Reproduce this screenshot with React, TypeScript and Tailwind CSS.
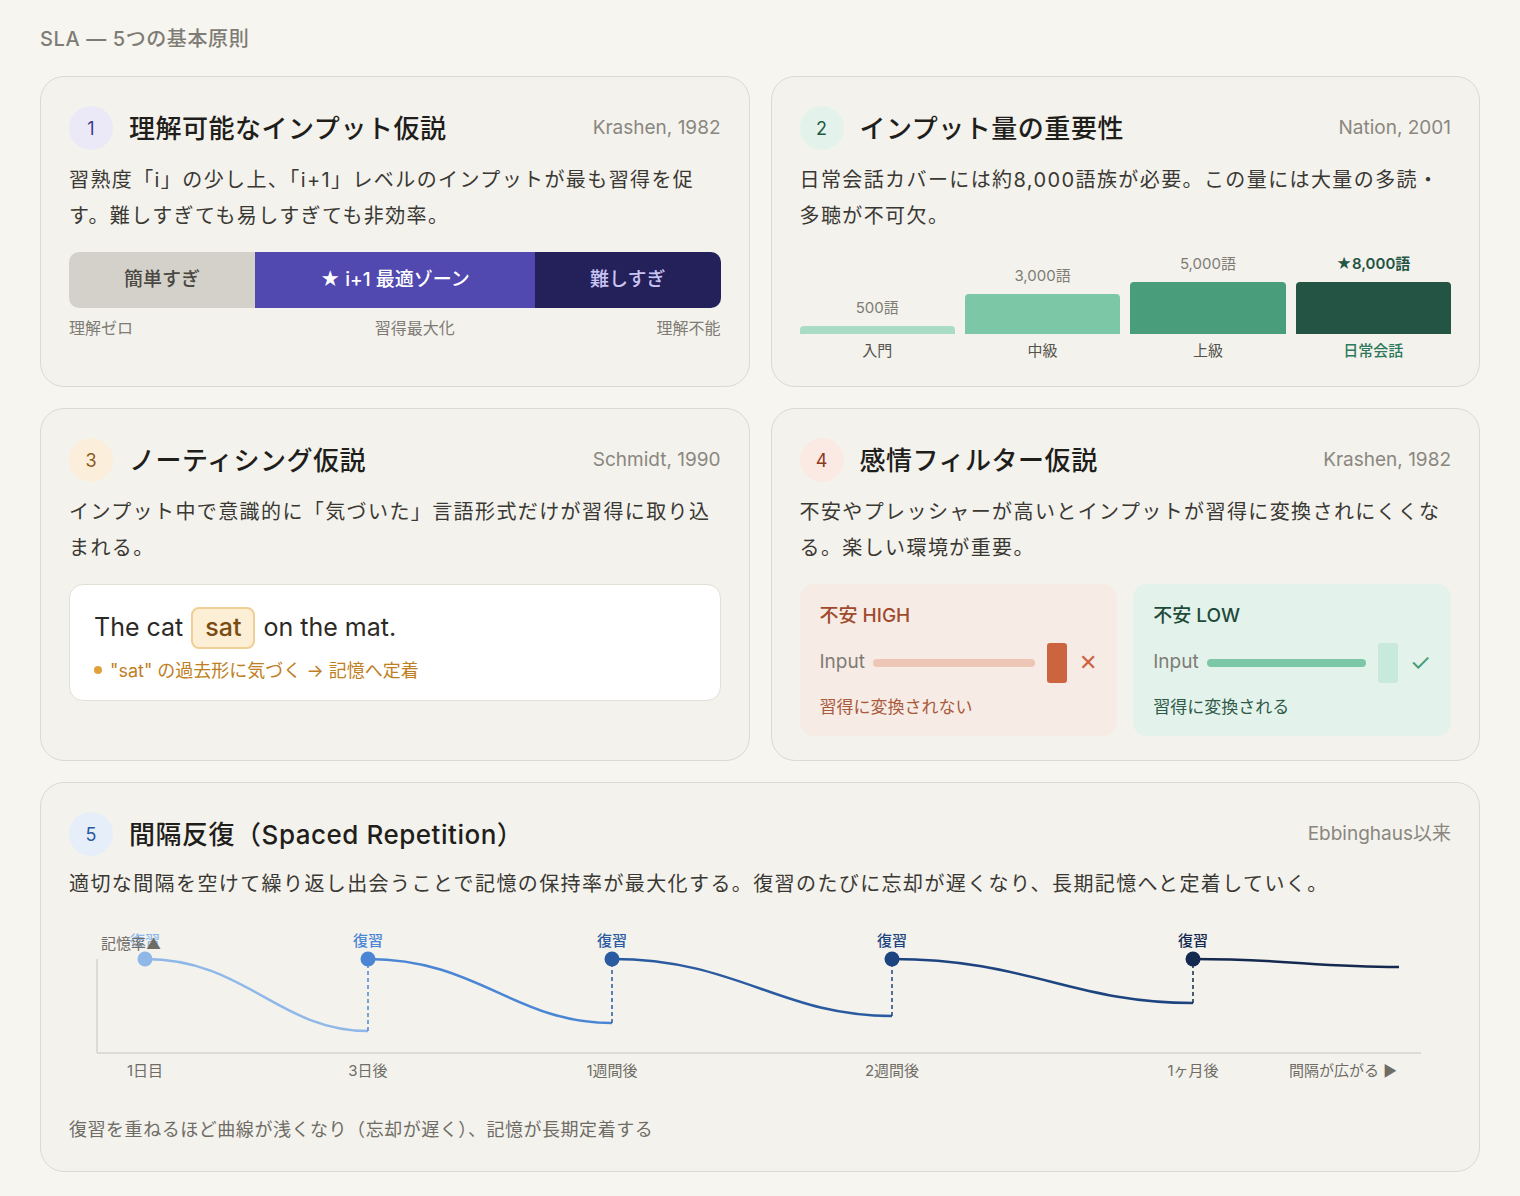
import React from "react";

const font = { fontFamily: '"Inter", "Noto Sans CJK JP", sans-serif' };

function Header({ n, title, cite, badge }: { n: string; title: string; cite: string; badge: string }) {
  return (
    <div className="flex items-center justify-between">
      <div className="flex items-center gap-4">
        <div className={`w-11 h-11 rounded-full flex items-center justify-center text-[18px] ${badge}`}>{n}</div>
        <div className="text-[26px] font-medium text-[#1f1e1b] tracking-[0.02em]">{title}</div>
      </div>
      <div className="text-[19px] text-[#8a877f]">{cite}</div>
    </div>
  );
}

function Card({ children, className = "" }: { children: React.ReactNode; className?: string }) {
  return (
    <div className={`rounded-[24px] border border-[#dcd9d1] bg-[#f3f2ed] px-7 pt-[29px] pb-7 ${className}`}>{children}</div>
  );
}

const bars = [
  { v: "500語", h: 8, c: "bg-[#a9dcc6]", l: "入門", hl: false },
  { v: "3,000語", h: 40, c: "bg-[#7cc8a6]", l: "中級", hl: false },
  { v: "5,000語", h: 52, c: "bg-[#4a9d7a]", l: "上級", hl: false },
  { v: "★8,000語", h: 52, c: "bg-[#245443]", l: "日常会話", hl: true },
];

const body = "text-[20px] leading-[36px] text-[#3a3833] tracking-[0.07em]";

function Chart() {
  const dots = [
    [76, 33, "#8fb8e8"],
    [299, 33, "#4a86d4"],
    [543, 33, "#2a5aa0"],
    [823, 33, "#1e4480"],
    [1124, 33, "#13294f"],
  ] as const;
  const ends = [
    [299, 105],
    [543, 97],
    [823, 90],
    [1124, 77],
    [1330, 41],
  ];
  const xl = ["1日目", "3日後", "1週間後", "2週間後", "1ヶ月後"];
  return (
    <svg width="1382" height="160" className="block" style={font}>
      <line x1="28" y1="33" x2="28" y2="127" stroke="#d6d3cb" strokeWidth="1.5" />
      <line x1="28" y1="127" x2="1352" y2="127" stroke="#d6d3cb" strokeWidth="1.5" />
      {dots.map(([x, y, c], i) => {
        const [ex, ey] = ends[i];
        const dx = ex - x;
        return (
          <g key={i}>
            <path
              d={`M${x} ${y} C ${x + dx * 0.45} ${y}, ${x + dx * 0.6} ${ey}, ${ex} ${ey}`}
              fill="none"
              stroke={c}
              strokeWidth="2.5"
            />
            {i < 4 && (
              <line x1={ex} y1={ey} x2={ex} y2={33} stroke={dots[i + 1][2]} strokeWidth="1.5" strokeDasharray="4 3" />
            )}
            <circle cx={x} cy={y} r="7.5" fill={c} />
            <text x={x} y={20} textAnchor="middle" fontSize="15" fill={c} fontWeight="500">復習</text>
            <text x={x} y={150} textAnchor="middle" fontSize="15" fill="#6f6c65">{xl[i]}</text>
          </g>
        );
      })}
      <text x="32" y="23" fontSize="15" fill="#6f6c65">記憶率▲</text>
      <text x="1328" y="150" textAnchor="end" fontSize="15" fill="#6f6c65">間隔が広がる ▶</text>
    </svg>
  );
}

export default function App() {
  return (
    <div className="min-h-screen bg-[#f6f5f0] px-10 pt-6 pb-6" style={font}>
      <div className="text-[20px] font-medium text-[#7f7c75] mb-[22px] tracking-[0.03em]">SLA — 5つの基本原則</div>
      <div className="grid grid-cols-2 gap-[21px]">
        <Card className="h-[311px]">
          <Header n="1" title="理解可能なインプット仮説" cite="Krashen, 1982" badge="bg-[#ebe9f8] text-[#3d3a8c]" />
          <p className={`mt-[12px] ${body}`}>
            習熟度「i」の少し上、「i+1」レベルのインプットが最も習得を促す。難しすぎても易しすぎても非効率。
          </p>
          <div className="mt-[18px] flex h-14 rounded-[10px] overflow-hidden text-[19px] font-medium">
            <div className="w-[186px] bg-[#d4d1ca] text-[#4a4842] flex items-center justify-center">簡単すぎ</div>
            <div className="w-[280px] bg-[#5149b0] text-white flex items-center justify-center">★ i+1 最適ゾーン</div>
            <div className="flex-1 bg-[#24205a] text-[#c8c4f2] flex items-center justify-center">難しすぎ</div>
          </div>
          <div className="mt-2 flex justify-between text-[16px] text-[#7f7c75]">
            <span>理解ゼロ</span><span className="ml-10">習得最大化</span><span>理解不能</span>
          </div>
        </Card>
        <Card className="h-[311px]">
          <Header n="2" title="インプット量の重要性" cite="Nation, 2001" badge="bg-[#e3f3ec] text-[#1f5a45]" />
          <p className={`mt-[12px] ${body}`}>
            日常会話カバーには約8,000語族が必要。この量には大量の多読・多聴が不可欠。
          </p>
          <div className="mt-[14px] grid grid-cols-4 gap-[10px] items-end h-[86px]">
            {bars.map((b) => (
              <div key={b.v} className="flex flex-col items-center">
                <div className={`text-[15px] mb-[7px] ${b.hl ? "text-[#245443] font-semibold" : "text-[#7f7c75]"}`}>{b.v}</div>
                <div className={`w-full rounded-t-[4px] ${b.c}`} style={{ height: b.h }} />
              </div>
            ))}
          </div>
          <div className="grid grid-cols-4 gap-[10px] mt-[6px] text-[15px] text-center">
            {bars.map((b) => (
              <div key={b.l} className={b.hl ? "text-[#2f7a5c] font-medium" : "text-[#55524c]"}>{b.l}</div>
            ))}
          </div>
        </Card>
        <Card className="h-[353px]">
          <Header n="3" title="ノーティシング仮説" cite="Schmidt, 1990" badge="bg-[#fbeedb] text-[#8a5a1c]" />
          <p className={`mt-[12px] ${body}`}>
            インプット中で意識的に「気づいた」言語形式だけが習得に取り込まれる。
          </p>
          <div className="mt-[18px] rounded-[14px] border border-[#e2dfd7] bg-white px-6 pt-[22px] pb-4">
            <div className="flex items-center gap-2 text-[25px] text-[#2c2a26]">
              <span>The cat</span>
              <span className="rounded-[8px] border-2 border-[#efcf94] bg-[#fcefd6] px-3 text-[#7a4c12] font-medium">sat</span>
              <span>on the mat.</span>
            </div>
            <div className="mt-[8px] flex items-center gap-2 text-[18px] text-[#c07e22]">
              <span className="w-2 h-2 rounded-full bg-[#e0a13c]" />
              "sat" の過去形に気づく → 記憶へ定着
            </div>
          </div>
        </Card>
        <Card className="h-[353px]">
          <Header n="4" title="感情フィルター仮説" cite="Krashen, 1982" badge="bg-[#fbe9e3] text-[#8a3a1f]" />
          <p className={`mt-[12px] ${body}`}>
            不安やプレッシャーが高いとインプットが習得に変換されにくくなる。楽しい環境が重要。
          </p>
          <div className="mt-[18px] grid grid-cols-2 gap-4">
            <div className="rounded-[14px] bg-[#f7ebe6] px-5 pt-[18px] pb-4">
              <div className="text-[19px] text-[#a04a2c] font-medium">不安 HIGH</div>
              <div className="mt-3 flex items-center gap-2">
                <span className="text-[19px] text-[#7f7c75]">Input</span>
                <div className="flex-1 h-2 rounded-full bg-[#eec6b6]" />
                <div className="ml-1 w-5 h-10 rounded-[3px] bg-[#cc6440]" />
                <span className="ml-1 text-[22px] text-[#cc6440]">✕</span>
              </div>
              <div className="mt-3 text-[17px] text-[#a85a3c]">習得に変換されない</div>
            </div>
            <div className="rounded-[14px] bg-[#e3f3ec] px-5 pt-[18px] pb-4">
              <div className="text-[19px] text-[#1f4a3a] font-medium">不安 LOW</div>
              <div className="mt-3 flex items-center gap-2">
                <span className="text-[19px] text-[#7f7c75]">Input</span>
                <div className="flex-1 h-2 rounded-full bg-[#7cc8a6]" />
                <div className="ml-1 w-5 h-10 rounded-[3px] bg-[#c8eadc]" />
                <span className="ml-1 text-[24px] text-[#4a9d7a]">✓</span>
              </div>
              <div className="mt-3 text-[17px] text-[#2f5a48]">習得に変換される</div>
            </div>
          </div>
        </Card>
        <Card className="col-span-2 h-[390px]">
          <Header n="5" title="間隔反復（Spaced Repetition）" cite="Ebbinghaus以来" badge="bg-[#e6eefa] text-[#2a5aa0]" />
          <p className={`mt-[10px] ${body} tracking-[0.04em]`}>
            適切な間隔を空けて繰り返し出会うことで記憶の保持率が最大化する。復習のたびに忘却が遅くなり、長期記憶へと定着していく。
          </p>
          <div className="mt-[24px]">
            <Chart />
          </div>
          <div className="mt-[30px] text-[18px] text-[#6f6c65] tracking-[0.03em]">復習を重ねるほど曲線が浅くなり（忘却が遅く）、記憶が長期定着する</div>
        </Card>
      </div>
    </div>
  );
}
